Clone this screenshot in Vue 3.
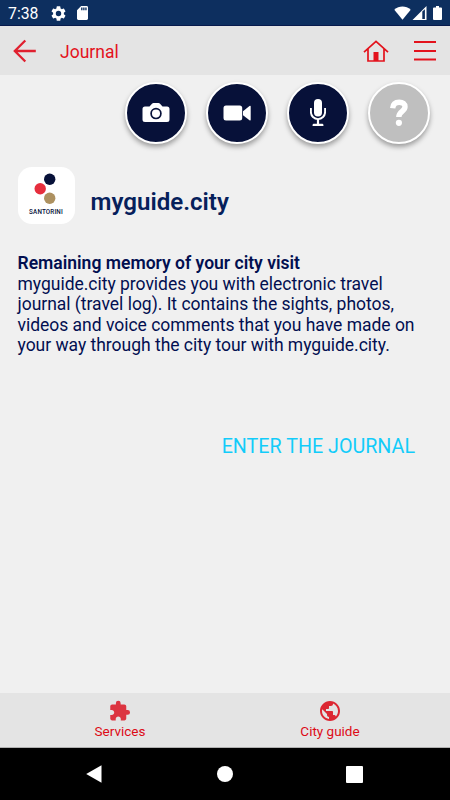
<script setup>
import {ref} from "vue";

const time = ref('7:38');

const paragraph = [
  'myguide.city provides you with electronic travel',
  'journal (travel log). It contains the sights, photos,',
  'videos and voice comments that you have made on',
  'your way through the city tour with myguide.city.',
];
</script>

<template>
  <div class="screen">
    <div class="status-bar">
      <span class="time">{{ time }}</span>
      <svg class="gear" viewBox="2 2 20 20" width="15" height="15">
        <path fill="#fff" d="M19.14 12.94c.04-.3.06-.61.06-.94s-.02-.64-.07-.94l2.03-1.58a.5.5 0 0 0 .12-.61l-1.92-3.32a.5.5 0 0 0-.59-.22l-2.39.96a7 7 0 0 0-1.62-.94L14.4 2.81a.5.5 0 0 0-.48-.41h-3.84a.5.5 0 0 0-.47.41l-.36 2.54a7 7 0 0 0-1.62.94l-2.39-.96a.5.5 0 0 0-.59.22L2.74 8.87a.5.5 0 0 0 .12.61l2.03 1.58a6 6 0 0 0 0 1.88l-2.03 1.58a.5.5 0 0 0-.12.61l1.92 3.32c.12.22.37.29.59.22l2.39-.96c.5.38 1.03.7 1.62.94l.36 2.54c.05.24.24.41.48.41h3.84c.24 0 .44-.17.47-.41l.36-2.54a7 7 0 0 0 1.62-.94l2.39.96c.22.08.47 0 .59-.22l1.92-3.32a.5.5 0 0 0-.12-.61zM12 15.6a3.6 3.6 0 1 1 0-7.2 3.6 3.6 0 0 1 0 7.2z"/>
      </svg>
      <svg class="card" viewBox="4 2 16 20" width="11" height="14" preserveAspectRatio="none">
        <path fill="#fff" d="M18 2h-8L4.020 8 4 20c0 1.100.9 2 2 2h12c1.100 0 2-.9 2-2V4c0-1.100-.9-2-2-2zm-6 6h-2V4h2v4zm3 0h-2V4h2v4zm3 0h-2V4h2v4z"/>
      </svg>
      <div class="signals">
        <svg viewBox="0 0 17 14" width="17" height="14">
          <path fill="#fff" d="M.3 3.700C5-.6 12-.6 16.700 3.700L8.500 13.800z"/>
        </svg>
        <svg viewBox="0 0 15 14" width="15" height="14">
          <path fill="#fff" fill-rule="evenodd" d="M.5 14 14.500 0v14zM10.300 5.600v7.300h2.600V3.200z"/>
        </svg>
        <svg class="battery" viewBox="0 0 9 14" width="9" height="14">
          <path fill="#fff" d="M3 0h3v1.500h2q1 0 1 1V13q0 1-1 1H1q-1 0-1-1V2.500q0-1 1-1h2z"/>
        </svg>
      </div>
    </div>

    <header class="toolbar">
      <svg class="back" viewBox="0 0 24 24" width="24" height="24">
        <path fill="none" stroke="#e0202f" stroke-width="2.300" d="M12.300 1.500 1.800 12l10.500 10.500M1.800 12h21"/>
      </svg>
      <h1>Journal</h1>
      <svg class="home" viewBox="0 0 26 22" width="26" height="22">
        <path fill="none" stroke="#e3121c" stroke-width="1.700" d="M1 12.200 13 1.300l12 10.900M5 9v12h16V9"/>
        <path fill="#e3121c" d="M10.500 12h5v9h-5z"/>
      </svg>
      <svg class="menu" viewBox="0 0 22 20" width="22" height="20">
        <path stroke="#e3121c" stroke-width="2" d="M0 1h22M0 10h22M0 18.600h22"/>
      </svg>
    </header>

    <main>
      <div class="actions">
        <button class="round" aria-label="Camera">
          <svg viewBox="0 0 28 22" width="28" height="22">
            <path fill="#fff" d="M3 4.500h4.500L10 1.700q.6-.7 1.500-.7h5q.9 0 1.500.7l2.500 2.800H25Q27.500 4.500 27.500 7v10.500q0 2.500-2.500 2.500H3Q.5 20 .5 17.500V7Q.5 4.500 3 4.500z"/>
            <circle cx="14" cy="11.600" r="4.900" fill="none" stroke="#071139" stroke-width="1.700"/>
          </svg>
        </button>
        <button class="round" aria-label="Video">
          <svg viewBox="0 0 28 18" width="28" height="18">
            <rect x=".5" y="1.500" width="18.700" height="15" rx="2.500" fill="#fff"/>
            <path fill="#fff" d="M20 7.300 26.500 2q1.200-.6 1.200.8v12.700q0 1.400-1.200.8L20 11.200z"/>
          </svg>
        </button>
        <button class="round" aria-label="Voice">
          <svg viewBox="0 0 16 28" width="16" height="28">
            <rect x="4" y="0" width="8" height="17.500" rx="4" fill="#fff"/>
            <path fill="none" stroke="#fff" stroke-width="1.900" d="M.9 9v4a7.100 7.100 0 0 0 14.200 0V9"/>
            <path fill="#fff" d="M6.900 20h2.200v4.700h3.400q1 0 1 2.300h-11q0-2.300 1-2.300h3.400z"/>
          </svg>
        </button>
        <button class="round help" aria-label="Help">
          <svg viewBox="0 0 18 28" width="18" height="28">
            <path fill="none" stroke="#fff" stroke-width="5.400" d="M2.700 9.200C3 5 5.500 3.200 9.200 3.200c3.700 0 5.800 1.700 5.800 4.600 0 4.700-6.200 4.600-6.200 10.300"/>
            <circle cx="8.900" cy="23.800" r="3.100" fill="#fff"/>
          </svg>
        </button>
      </div>

      <section class="brand">
        <div class="logo">
          <svg viewBox="0 0 57 38" width="57" height="38">
            <circle cx="31.700" cy="12.300" r="5.700" fill="#071139"/>
            <circle cx="22.200" cy="21.700" r="5.700" fill="#e62e3d"/>
            <circle cx="31.700" cy="31.300" r="5.700" fill="#ad9160"/>
          </svg>
          <span>SANTORINI</span>
        </div>
        <h2>myguide.city</h2>
      </section>

      <section class="about">
        <h3>Remaining memory of your city visit</h3>
        <p><template v-for="line in paragraph" :key="line">{{ line }}<br></template></p>
      </section>

      <a class="enter">ENTER THE JOURNAL</a>
    </main>

    <footer class="tabs">
      <a>
        <svg viewBox="-.4 -.8 25.500 25.500" width="24" height="24">
          <path fill="#dc3440" d="M20.500 11H19V7c0-1.100-.9-2-2-2h-4V3.500a2.500 2.500 0 0 0-5 0V5H4c-1.100 0-1.990.9-1.990 2v3.800H3.500c1.490 0 2.700 1.210 2.700 2.700s-1.210 2.700-2.700 2.700H2V20c0 1.100.9 2 2 2h3.800v-1.500c0-1.490 1.210-2.700 2.700-2.700s2.700 1.210 2.700 2.700V22H17c1.100 0 2-.9 2-2v-4h1.500a2.500 2.500 0 0 0 0-5z"/>
        </svg>
        <span>Services</span>
      </a>
      <a>
        <svg viewBox="0 0 24 24" width="24" height="24">
          <path fill="#dc2733" d="M12 2C6.480 2 2 6.480 2 12s4.480 10 10 10 10-4.480 10-10S17.520 2 12 2zm-1 17.930c-3.950-.49-7-3.850-7-7.930 0-.62.080-1.210.21-1.790L9 15v1c0 1.100.9 2 2 2v1.930zm6.900-2.540c-.26-.81-1-1.390-1.900-1.390h-1v-3c0-.55-.45-1-1-1H8v-2h2c.55 0 1-.45 1-1V7h2c1.100 0 2-.9 2-2v-.41c2.930 1.190 5 4.060 5 7.410 0 2.080-.8 3.970-2.100 5.390z"/>
        </svg>
        <span>City guide</span>
      </a>
    </footer>

    <nav class="system-nav">
      <svg viewBox="0 0 16 18" width="16" height="18"><path fill="#fff" d="M15.500.3v17.400L.2 9z"/></svg>
      <svg class="circle" viewBox="0 0 16 16" width="16" height="16"><circle cx="8" cy="8" r="8" fill="#fff"/></svg>
      <svg viewBox="0 0 17 17" width="17" height="17"><rect width="17" height="17" rx="1" fill="#fff"/></svg>
    </nav>
  </div>
</template>

<style>
body {
  margin: 0;
}
</style>

<style scoped>
.screen {
  display: flex;
  flex-direction: column;
  width: 450px;
  height: 800px;
  overflow: hidden;
  background: #f0f0f0;
  font-family: Roboto, 'Liberation Sans', sans-serif;
}

svg {
  display: block;
  flex: none;
}

h1, h2, h3, p {
  margin: 0;
}

/* Status bar */
.status-bar {
  display: flex;
  align-items: center;
  box-sizing: border-box;
  height: 26px;
  padding: 1px 8px 0 8px;
  background: #0d2f5f;
  border-bottom: 1px solid #071a4c;
}

.time {
  width: 43px;
  margin-top: 1px;
  color: #fff;
  font-size: 15.8px;
}

.card {
  margin-left: 11px;
}

.signals {
  display: flex;
  gap: 1px;
  margin-left: auto;
}

.battery {
  margin-left: 5px;
}

/* Toolbar */
.toolbar {
  display: flex;
  align-items: center;
  box-sizing: border-box;
  height: 49px;
  padding: 0 14px 0 13px;
  background: #e4e4e4;
}

.toolbar h1 {
  margin: 2px 0 0 23px;
  color: #e3121c;
  font-size: 17.5px;
  font-weight: 400;
}

.home {
  margin-left: auto;
}

.menu {
  margin-left: 25px;
}

main {
  display: flex;
  flex-direction: column;
  flex: 1;
}

.actions {
  display: flex;
  justify-content: flex-end;
  gap: 19px;
  padding: 7px 20px 0 0;
}

.round {
  display: flex;
  align-items: center;
  justify-content: center;
  box-sizing: border-box;
  width: 62px;
  height: 62px;
  padding: 0;
  border: 2px solid #fff;
  border-radius: 50%;
  background: #071139;
  box-shadow: 0 3px 5px rgba(0, 0, 0, .35);
}

.help {
  background: #bfbfbf;
}

/* Brand */
.brand {
  display: flex;
  height: 57px;
  margin: 23px 0 0 17.5px;
}

.logo {
  width: 57px;
  height: 57px;
  border-radius: 14px;
  background: #fff;
  text-align: center;
}

.logo span {
  display: block;
  margin-top: 4px;
  color: #071139;
  font-size: 6.3px;
  font-weight: 500;
  line-height: 7px;
  letter-spacing: .15px;
}

.brand h2 {
  margin: 21px 0 0 16px;
  color: #06205b;
  font-size: 24.1px;
  font-weight: 600;
  line-height: 28px;
}

/* Text */
.about {
  margin: 29.4px 0 0 17.5px;
  color: #020f50;
  font-size: 17.5px;
  line-height: 20.5px;
  letter-spacing: -.02px;
  white-space: nowrap;
}

.about h3 {
  font-size: 17.55px;
  font-weight: 600;
  letter-spacing: 0;
}

.about p {
  font-weight: 400;
}

.enter {
  align-self: flex-end;
  margin: 79.5px 35px 0 0;
  color: #12ccfa;
  font-size: 19.7px;
  font-weight: 400;
  line-height: 24px;
}

/* Bottom tabs */
.tabs {
  display: flex;
  justify-content: center;
  box-sizing: border-box;
  height: 55px;
  background: #e4e4e4;
  border-bottom: 1px solid #b0b0b0;
}

.tabs a {
  display: flex;
  flex-direction: column;
  align-items: center;
  width: 210px;
  padding-top: 6px;
  color: #dd0a16;
  font-size: 13.5px;
  line-height: 16px;
}

.system-nav {
  display: flex;
  align-items: center;
  justify-content: space-between;
  box-sizing: border-box;
  height: 52px;
  padding: 0 87px 0 86px;
  background: #000;
}

.circle {
  margin-left: 1px;
}
</style>
